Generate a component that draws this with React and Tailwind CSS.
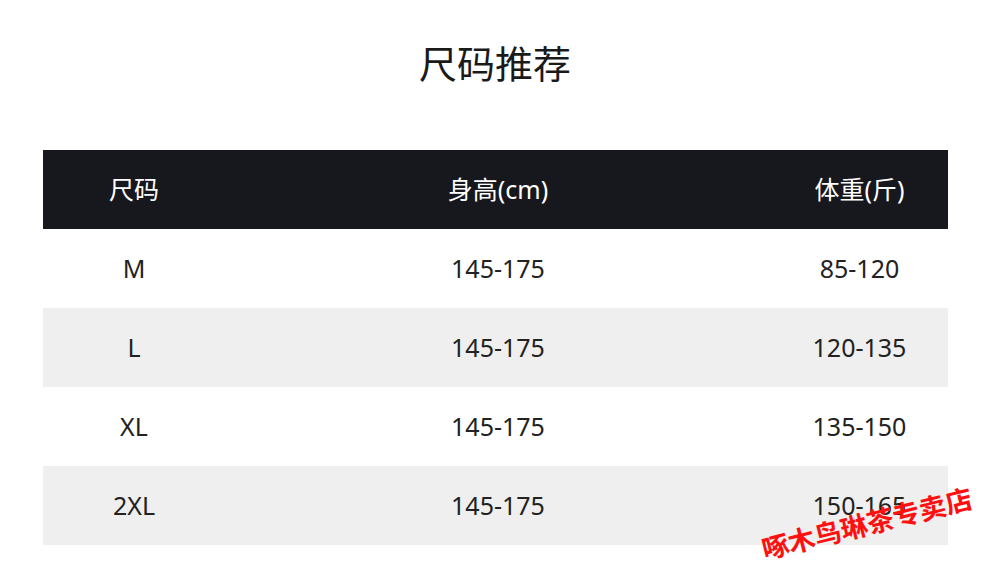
const rows = [
    { size: "M", height: "145-175", weight: "85-120" },
    { size: "L", height: "145-175", weight: "120-135" },
    { size: "XL", height: "145-175", weight: "135-150" },
    { size: "2XL", height: "145-175", weight: "150-165" },
];

const font = { fontFamily: '"Noto Sans", "Noto Sans CJK SC", sans-serif' };

export default function App() {
    return (
        <div className="relative w-[990px] h-[587px] bg-white overflow-hidden" style={font}>
            {/* Title */}
            <h1 className="pt-[38px] text-center text-[38px] leading-[50px] text-[#1a1a1a] font-normal">尺码推荐</h1>

            {/* Size table */}
            <div className="mt-[62px] mx-[43px] w-[905px]">
                <div className="grid grid-cols-[182px_546px_177px] h-[79px] items-center bg-[#17171e] text-white text-[25px]">
                    <div className="text-center">尺码</div>
                    <div className="text-center">身高(cm)</div>
                    <div className="text-center">体重(斤)</div>
                </div>
                {rows.map((row, i) => (
                    <div
                        key={row.size}
                        className={`grid grid-cols-[182px_546px_177px] h-[79px] items-center text-[25px] text-[#222] ${i % 2 === 1 ? "bg-[#efefef]" : "bg-white"}`}
                    >
                        <div className="text-center">{row.size}</div>
                        <div className="text-center">{row.height}</div>
                        <div className="text-center">{row.weight}</div>
                    </div>
                ))}
            </div>

            {/* Shop watermark */}
            <div className="absolute left-[756px] top-[508px] w-[222px] text-center text-[27px] leading-[32px] font-bold text-[#ff1010] -rotate-[14deg]">
                啄木鸟琳茶专卖店
            </div>
        </div>
    );
}
